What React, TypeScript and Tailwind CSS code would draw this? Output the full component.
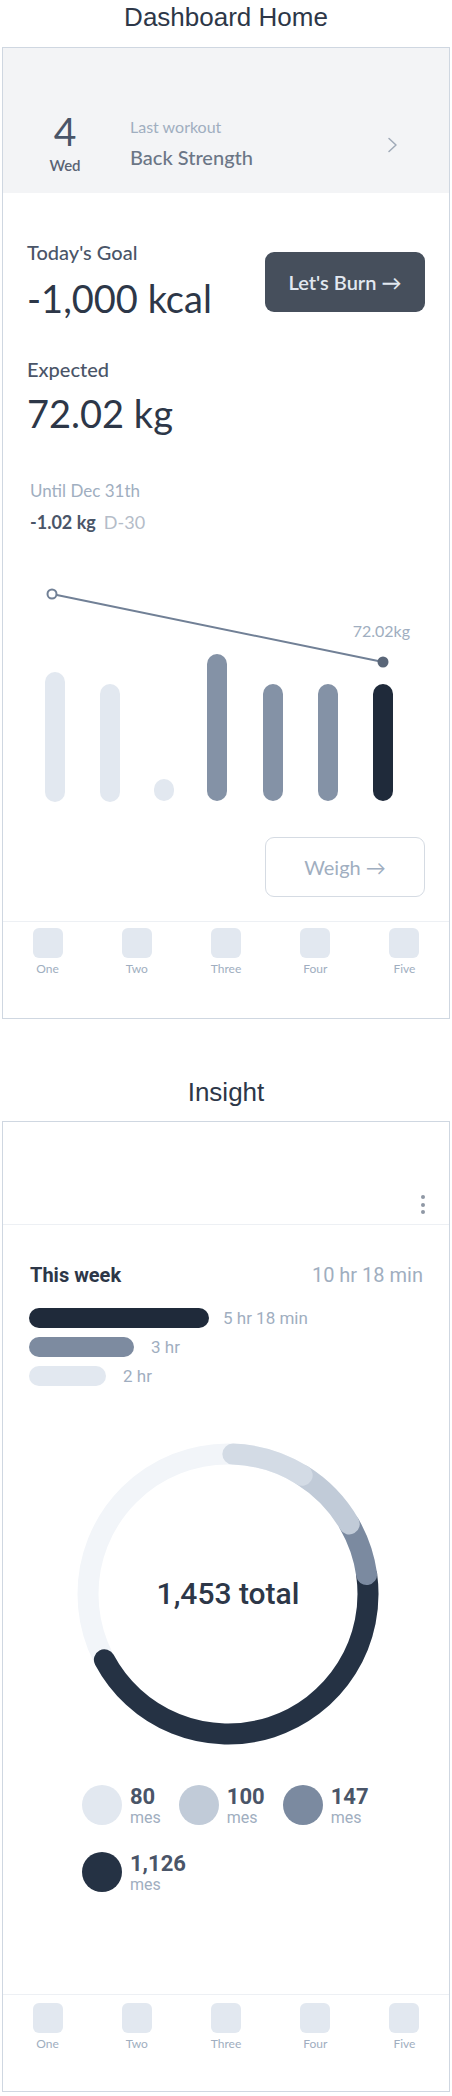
import React from "react";

const navItems = ["One", "Two", "Three", "Four", "Five"];

const BottomNav = ({ top }: { top: string }) => (
  <div className={`mt-auto h-[97px] border-t border-[#edf0f4] grid grid-cols-5 ${top} font-['Lato',sans-serif]`}>
    {navItems.map((n) => (
      <div key={n} className="flex flex-col items-center">
        <div className="w-[30px] h-[30px] rounded-[6px] bg-[#e2e8f0]" />
        <span className="mt-[4px] text-[12px] leading-[14px] text-[#a0aec0]">{n}</span>
      </div>
    ))}
  </div>
);

const bars = [
  { x: 42, y: 92, h: 130, c: "#e2e8f0" },
  { x: 97, y: 104, h: 118, c: "#e2e8f0" },
  { x: 151, y: 199, h: 22, c: "#e2e8f0" },
  { x: 204, y: 74, h: 147, c: "#8492a6" },
  { x: 260, y: 104, h: 117, c: "#8492a6" },
  { x: 315, y: 104, h: 117, c: "#8492a6" },
  { x: 370, y: 104, h: 117, c: "#1f2a3a" },
];

// point on ring, angle clockwise from 12 o'clock
const pt = (a: number, r = 140, c = 151) => {
  const rad = (a * Math.PI) / 180;
  return `${c + r * Math.sin(rad)} ${c - r * Math.cos(rad)}`;
};
const arc = (from: number, to: number) =>
  `M ${pt(from)} A 140 140 0 ${to - from > 180 ? 1 : 0} 1 ${pt(to)}`;

const segments = [
  { from: 82, to: 242, c: "#253244" },
  { from: 60, to: 82, c: "#7b8aa0" },
  { from: 32, to: 60, c: "#c1cbd8" },
  { from: 2, to: 32, c: "#d3dbe5" },
];

const legend = [
  { v: "80", c: "#e2e8f0" },
  { v: "100", c: "#c1cbd8" },
  { v: "147", c: "#7b8aa0" },
  { v: "1,126", c: "#253244" },
];

export default function App() {
  return (
    <div className="w-[452px] bg-white pb-[4px]">
      <h2 className="pt-[2px] text-center font-['Liberation_Sans',Arial,sans-serif] text-[26px] leading-[30px] text-[#2d3748]">
        Dashboard Home
      </h2>

      {/* Dashboard phone */}
      <div className="ml-[2px] mt-[15px] w-[448px] h-[972px] border border-[#cfd7e1] flex flex-col font-['Lato',sans-serif]">
        <div className="h-[145px] shrink-0 bg-[#f3f4f6] flex items-start pt-[63px]">
          <div className="ml-[34px] w-[56px] flex flex-col items-center">
            <span className="text-[39px] leading-[40px] text-[#4a5568]">4</span>
            <span className="mt-[5px] text-[15px] leading-[18px] font-semibold text-[#5a6474]">Wed</span>
          </div>
          <div className="ml-[37px] mt-[6px] flex flex-col">
            <span className="text-[16px] leading-[20px] text-[#a0aec0]">Last workout</span>
            <span className="mt-[8px] text-[20px] leading-[24px] font-medium text-[#6b7686]">Back Strength</span>
          </div>
          <svg className="ml-auto mr-[51px] mt-[26px]" width="11" height="16" viewBox="0 0 11 16" fill="none">
            <path d="M2 1.5 L9 8 L2 14.5" stroke="#a0aab8" strokeWidth="1.5" strokeLinecap="round" strokeLinejoin="round" />
          </svg>
        </div>

        <div className="px-[24px] pt-[47px] flex items-start justify-between">
          <div className="flex flex-col">
            <span className="text-[20px] leading-[24px] font-medium text-[#4a5568]">Today's Goal</span>
            <span className="mt-[14px] text-[38px] leading-[40px] text-[#2d3748]">-1,000 kcal</span>
          </div>
          <button className="mt-[12px] w-[160px] h-[60px] rounded-[9px] bg-[#464f5c] text-[#e2e8f0] text-[20px] font-semibold">
            Let's Burn →
          </button>
        </div>

        <div className="px-[24px] flex flex-col">
          <span className="mt-[39px] text-[20px] leading-[24px] font-medium text-[#4a5568]">Expected</span>
          <span className="mt-[12px] text-[38px] leading-[40px] text-[#2d3748]">72.02 kg</span>
          <span className="mt-[48px] ml-[3px] text-[17px] leading-[20px] text-[#a0aec0]">Until Dec 31th</span>
          <div className="mt-[10px] ml-[3px] text-[18px] leading-[22px]">
            <span className="font-bold text-[#4a5568]">-1.02 kg</span>
            <span className="ml-[8px] text-[#b4bcc8]">D-30</span>
          </div>
        </div>

        <svg className="mt-[47px] shrink-0" width="446" height="230" viewBox="0 0 446 230">
          {bars.map((b, i) => (
            <rect key={i} x={b.x} y={b.y} width="20" height={b.h} rx="10" fill={b.c} />
          ))}
          <line x1="49" y1="14" x2="380" y2="82" stroke="#718096" strokeWidth="2" />
          <circle cx="49" cy="14" r="4.5" fill="white" stroke="#718096" strokeWidth="2" />
          <circle cx="380" cy="82" r="5.5" fill="#5a6678" />
          <text x="407" y="57" textAnchor="end" fontSize="16" fill="#a0aec0" fontFamily="Lato, sans-serif">
            72.02kg
          </text>
        </svg>

        <button className="self-end mr-[24px] mt-[27px] w-[160px] h-[60px] rounded-[9px] border-[1.5px] border-[#d5dbe3] bg-white text-[20px] text-[#a0aec0]">
          Weigh →
        </button>

        <BottomNav top="pt-[6px]" />
      </div>

      <h2 className="mt-[58px] text-center font-['Liberation_Sans',Arial,sans-serif] text-[26px] leading-[30px] text-[#2d3748]">
        Insight
      </h2>

      {/* Insight phone */}
      <div className="ml-[2px] mt-[14px] w-[448px] h-[971px] border border-[#cfd7e1] flex flex-col font-['Roboto',sans-serif]">
        <div className="h-[103px] shrink-0 border-b border-[#edf0f4] flex justify-end items-end pr-[24px] pb-[10px]">
          <div className="flex flex-col gap-[3.5px]">
            <span className="w-[4px] h-[4px] rounded-full bg-[#8f98a5]" />
            <span className="w-[4px] h-[4px] rounded-full bg-[#8f98a5]" />
            <span className="w-[4px] h-[4px] rounded-full bg-[#8f98a5]" />
          </div>
        </div>

        <div className="pl-[27px] pr-[26px] pt-[38px] flex items-center justify-between">
          <span className="text-[20px] leading-[24px] font-bold text-[#2d3748]">This week</span>
          <span className="text-[20px] leading-[24px] text-[#a0aec0]">10 hr 18 min</span>
        </div>

        <div className="pl-[26px] mt-[21px] flex flex-col gap-[9px]">
          <div className="flex items-center">
            <div className="w-[180px] h-[20px] rounded-full bg-[#1f2a3a]" />
            <span className="ml-[14px] text-[17px] leading-[20px] text-[#a0aec0]">5 hr 18 min</span>
          </div>
          <div className="flex items-center">
            <div className="w-[105px] h-[20px] rounded-full bg-[#7d8ba0]" />
            <span className="ml-[17px] text-[17px] leading-[20px] text-[#a0aec0]">3 hr</span>
          </div>
          <div className="flex items-center">
            <div className="w-[77px] h-[20px] rounded-full bg-[#e2e8f0]" />
            <span className="ml-[17px] text-[17px] leading-[20px] text-[#a0aec0]">2 hr</span>
          </div>
        </div>

        <div className="relative ml-[74px] mt-[57px] w-[302px] h-[302px] shrink-0">
          <svg width="302" height="302" viewBox="0 0 302 302" fill="none">
            <circle cx="151" cy="151" r="140" stroke="#f2f5f9" strokeWidth="21" />
            {segments.map((s, i) => (
              <path key={i} d={arc(s.from, s.to)} stroke={s.c} strokeWidth="21" strokeLinecap="round" />
            ))}
          </svg>
          <div className="absolute inset-0 flex items-center justify-center">
            <span className="text-[30px] leading-[30px] font-medium text-[#2d3748]">1,453 total</span>
          </div>
        </div>

        <div className="ml-[79px] mt-[40px] w-[300px] flex flex-wrap gap-x-[18px] gap-y-[25px]">
          {legend.map((l) => (
            <div key={l.v} className="flex items-start">
              <div className="w-[40px] h-[40px] rounded-full" style={{ backgroundColor: l.c }} />
              <div className="ml-[8px] flex flex-col">
                <span className="text-[22px] leading-[24px] font-bold text-[#4a5568]">{l.v}</span>
                <span className="text-[16px] leading-[18px] text-[#a0aec0]">mes</span>
              </div>
            </div>
          ))}
        </div>

        <BottomNav top="pt-[8px]" />
      </div>
    </div>
  );
}
